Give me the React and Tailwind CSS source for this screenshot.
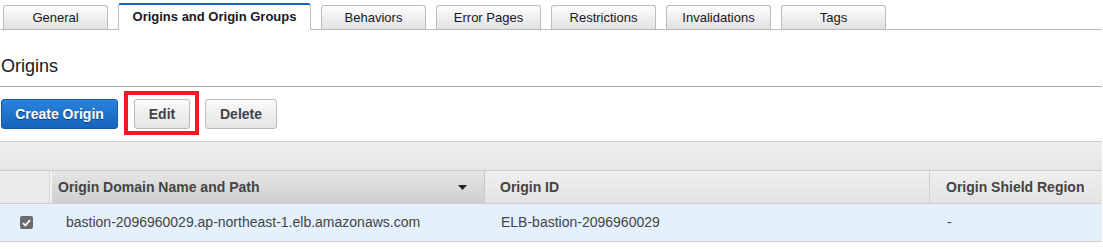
import React from "react";

const tabs = [
  { label: "General" },
  { label: "Origins and Origin Groups", active: true },
  { label: "Behaviors" },
  { label: "Error Pages" },
  { label: "Restrictions" },
  { label: "Invalidations" },
  { label: "Tags" },
];

function Tab({ label, active }) {
  if (active) {
    return (
      <div className="relative z-10 -mb-px flex h-[27px] w-[193px] items-center justify-center rounded-t-[3px] border-x border-t-2 border-x-[#bbbbbb] border-t-[#1166bb] bg-white pb-[2px] text-[13px] font-bold text-[#16191f]">
        {label}
      </div>
    );
  }
  return (
    <div className="flex h-[24px] w-[105px] items-center justify-center rounded-t-[3px] border-x border-t border-[#bbbbbb] bg-gradient-to-b from-[#fdfdfd] to-[#e2e2e2] text-[13px] text-[#16191f]">
      {label}
    </div>
  );
}

export default function App() {
  return (
    <div className="h-[249px] w-[1103px] overflow-hidden bg-white font-['Liberation_Sans',Arial,sans-serif] text-[#444]">
      {/* Tabs */}
      <div className="mr-px flex items-end gap-[10px] border-b border-[#bbbbbb] pl-[3px] pt-[3px]">
        {tabs.map((t) => (
          <Tab key={t.label} {...t} />
        ))}
      </div>

      {/* Heading */}
      <div className="mr-px flex h-[57px] items-center border-b border-[#aaaaaa] pl-px pt-[17px] text-[18px] text-[#16191f]">
        Origins
      </div>

      {/* Buttons */}
      <div className="flex items-center pl-px pt-[12px]">
        <button className="h-[30px] w-[117px] rounded-[3px] border border-[#1458a8] bg-gradient-to-b from-[#2b83dc] to-[#1464bd] text-[14px] font-bold text-white [text-shadow:0_1px_1px_#103a70]">
          Create Origin
        </button>
        <div className="relative ml-[16px]">
          <button className="h-[30px] w-[56px] rounded-[3px] border border-[#bbbbbb] bg-gradient-to-b from-[#fbfbfb] to-[#e4e4e4] text-[14px] font-bold text-[#444]">
            Edit
          </button>
          <div className="pointer-events-none absolute -bottom-[6px] -left-[10px] -right-[9px] -top-[8px] border-4 border-[#ed1c24]" />
        </div>
        <button className="ml-[15px] h-[30px] w-[72px] rounded-[3px] border border-[#bbbbbb] bg-gradient-to-b from-[#fbfbfb] to-[#e4e4e4] text-[14px] font-bold text-[#444]">
          Delete
        </button>
      </div>

      {/* Table */}
      <div className="mr-px mt-[12px] border-t border-[#cccccc]">
        <div className="h-[28px] bg-gradient-to-b from-[#efefef] to-[#e6e6e6]" />
        <div className="flex h-[33px] border-t border-[#cccccc] text-[14px] font-bold text-[#444]">
          <div className="w-[50px] border-r border-[#d8d8d8] bg-[#ebebeb]" />
          <div className="flex w-[435px] items-center justify-between border-r border-[#c8c8c8] bg-gradient-to-b from-[#e6e6e6] to-[#cfcfcf] pl-[8px] pr-[17px] [box-shadow:inset_2px_0_0_#f2f2f2]">
            <span>Origin Domain Name and Path</span>
            <svg width="9" height="5" viewBox="0 0 9 5">
              <path d="M0 0 H9 L4.5 5 Z" fill="#222" />
            </svg>
          </div>
          <div className="flex w-[445px] items-center border-r border-[#d0d0d0] bg-gradient-to-b from-[#efefef] to-[#e3e3e3] pl-[15px]">
            Origin ID
          </div>
          <div className="flex flex-1 items-center bg-gradient-to-b from-[#efefef] to-[#e3e3e3] pl-[16px]">
            Origin Shield Region
          </div>
        </div>
        <div className="flex h-[39px] items-center border-y border-[#cccccc] bg-[#e4f0fc] text-[14px] text-[#444]">
          <div className="flex w-[50px] justify-center pl-[3px]">
            <span className="flex h-[13px] w-[13px] items-center justify-center rounded-[2px] bg-[#6b6b6b]">
              <svg width="9" height="8" viewBox="0 0 9 8">
                <path d="M1 4.2 L3.4 6.5 L8 1.2" fill="none" stroke="#fff" strokeWidth="1.8" />
              </svg>
            </span>
          </div>
          <div className="w-[436px] pl-[16px]">bastion-2096960029.ap-northeast-1.elb.amazonaws.com</div>
          <div className="w-[445px] pl-[15px]">ELB-bastion-2096960029</div>
          <div className="flex-1 pl-[16px]">-</div>
        </div>
      </div>
    </div>
  );
}
